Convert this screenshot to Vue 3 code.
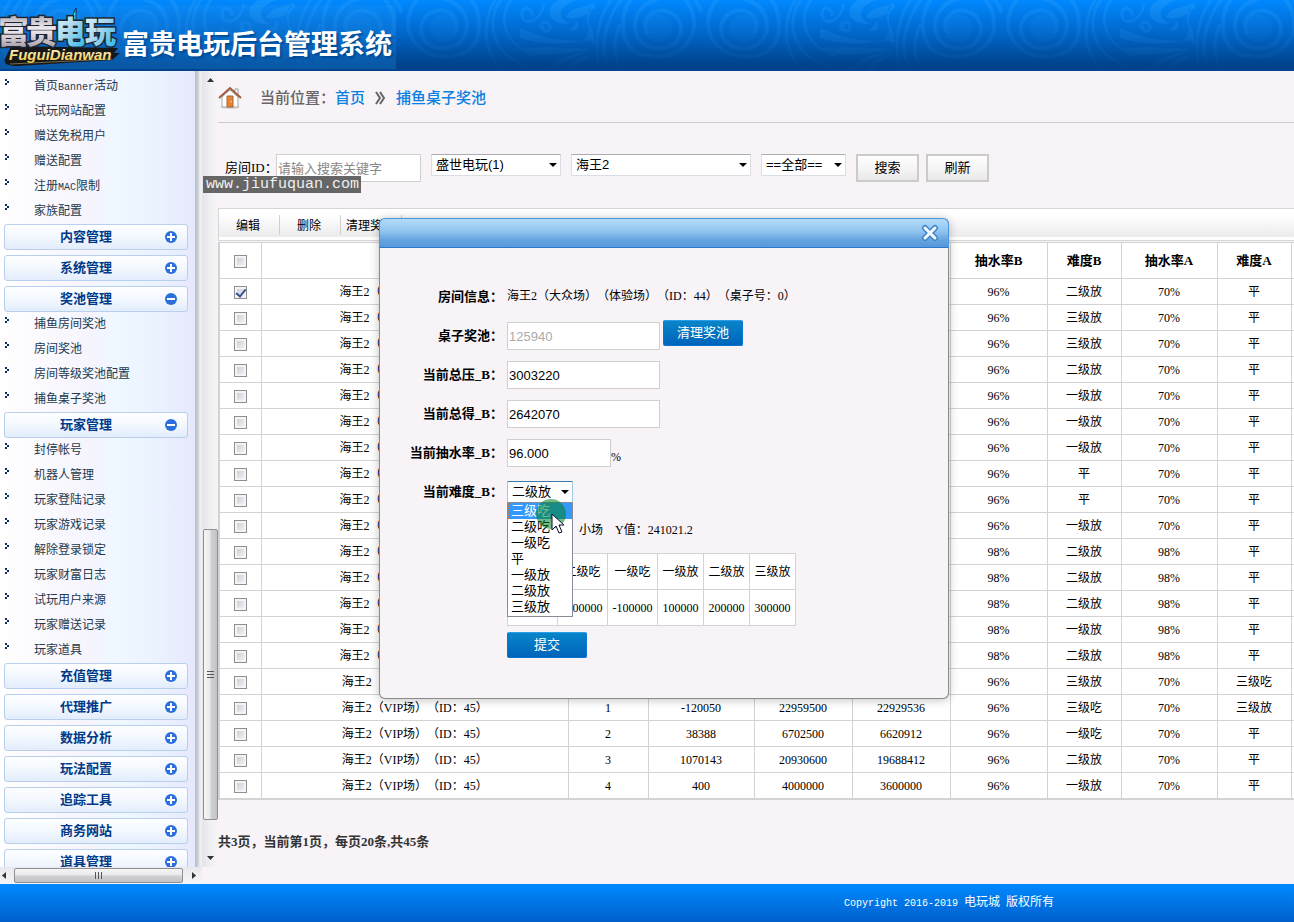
<script setup>
import { ref } from 'vue'

const menu = [
  { title: '', items: [['首页', 'Banner', '活动'], ['试玩网站配置'], ['赠送免税用户'], ['赠送配置'], ['注册', 'MAC', '限制'], ['家族配置']] },
  { title: '内容管理' },
  { title: '系统管理' },
  { title: '奖池管理', items: [['捕鱼房间奖池'], ['房间奖池'], ['房间等级奖池配置'], ['捕鱼桌子奖池']] },
  { title: '玩家管理', items: [['封停帐号'], ['机器人管理'], ['玩家登陆记录'], ['玩家游戏记录'], ['解除登录锁定'], ['玩家财富日志'], ['试玩用户来源'], ['玩家赠送记录'], ['玩家道具']] },
  { title: '充值管理' },
  { title: '代理推广' },
  { title: '数据分析' },
  { title: '玩法配置' },
  { title: '追踪工具' },
  { title: '商务网站' },
  { title: '道具管理' },
]

const levelB = ['二级放', '三级放', '三级放', '二级放', '一级放', '一级放', '一级放', '平', '平', '一级放', '二级放', '二级放', '二级放', '一级放', '二级放', '三级放', '三级吃', '一级吃', '二级放', '一级放']
const totals = {
  16: ['1', '-120050', '22959500', '22929536'],
  17: ['2', '38388', '6702500', '6620912'],
  18: ['3', '1070143', '20930600', '19688412'],
  19: ['4', '400', '4000000', '3600000'],
}
const rows = levelB.map((level, i) => ({
  checked: ref(i === 0),
  room: i < 15 ? '海王2（大众场）（ID：44）' : '海王2（VIP场）（ID：45）',
  totals: totals[i] || ['', '', '', ''],
  rateB: i > 9 && i < 15 ? '98%' : '96%',
  levelB: level,
  rateA: i > 9 && i < 15 ? '98%' : '70%',
  levelA: i === 15 ? '三级吃' : i === 16 ? '三级放' : '平',
}))

const options = ['三级吃', '二级吃', '一级吃', '平', '一级放', '二级放', '三级放']
const grades = [['三级吃', '-300000'], ['二级吃', '-200000'], ['一级吃', '-100000'], ['一级放', '100000'], ['二级放', '200000'], ['三级放', '300000']]
const difficulty = ref('二级放')
</script>

<template>
  <div class="page">
    <header class="top">
      <svg class="swirls" width="100%" height="71" aria-hidden="true">
        <defs>
          <pattern id="swirl" x="-4" y="0" width="300" height="71" patternUnits="userSpaceOnUse">
            <g fill="none" stroke="#38a8ff" stroke-width="4">
              <circle cx="62" cy="28" r="14" fill="#38a8ff" fill-opacity=".5" stroke="none" />
              <circle cx="148" cy="28" r="14" fill="#38a8ff" fill-opacity=".5" stroke="none" />
              <path d="M52 34C44 20 56 8 70 11C84 14 90 30 80 42C70 52 50 50 42 38C34 22 42 4 62 -1" />
              <path d="M36 -2C22 16 24 46 44 54C70 64 100 48 98 22Q97 8 88 -2" />
              <path d="M16 71C0 50 10 20 26 -2M26 71C14 50 20 36 24 24M4 71C-4 40 4 14 16 -2" stroke-width="3" />
              <path d="M158 34C166 20 154 8 140 11C126 14 120 30 130 42C140 52 160 50 168 38C176 22 168 4 148 -1" />
              <path d="M174 -2C188 16 186 46 166 54C140 64 112 48 112 22Q113 8 122 -2M106 12L98 -2" />
              <path d="M206 -2C188 20 196 60 236 66M216 -2C200 20 210 46 240 56M200 -2C184 26 188 54 208 71" stroke-width="3" />
              <path d="M248 4C244 24 226 26 226 14C226 4 238 8 236 16M246 30C240 20 256 20 254 28C252 34 244 30 248 25" stroke-width="3" />
            </g>
            <g fill="#45b1ff">
              <path d="M262 0C246 10 254 25 274 24C262 18 260 8 280 0ZM270 18C274 6 290 8 296 3C294 16 282 20 270 18ZM272 30Q280 26 280 21Q286 28 278 31ZM284 42Q298 34 290 22Q300 30 299 46Q296 38 284 42ZM298 2Q286 12 294 28Q290 12 299 8Z" />
              <path d="M224 28Q254 42 286 41Q250 47 224 38ZM220 48Q260 46 296 49Q264 56 240 54ZM252 70Q262 56 296 50Q272 58 258 71ZM268 71Q276 58 296 54Q282 62 276 71Z" />
            </g>
          </pattern>
          <linearGradient id="fade" x1="0" y1="0" x2="0" y2="1">
            <stop offset="0" stop-color="#fff" stop-opacity=".24" />
            <stop offset=".5" stop-color="#fff" stop-opacity=".12" />
            <stop offset="1" stop-color="#fff" stop-opacity=".01" />
          </linearGradient>
          <mask id="swirlMask"><rect width="100%" height="71" fill="url(#fade)" /></mask>
        </defs>
        <rect width="100%" height="71" fill="url(#swirl)" mask="url(#swirlMask)" />
      </svg>
      <div class="brand">
        <svg class="logo" width="122" height="71" viewBox="0 0 122 71" role="img" aria-label="富贵电玩">
          <defs>
            <linearGradient id="silver" x1="0" y1="0" x2="0" y2="1">
              <stop offset="0" stop-color="#8d8b98" /><stop offset=".5" stop-color="#f1edf1" /><stop offset="1" stop-color="#968b98" />
            </linearGradient>
            <linearGradient id="cyan" x1="0" y1="0" x2="1" y2="1">
              <stop offset="0" stop-color="#eafcff" /><stop offset=".5" stop-color="#a9d6ed" /><stop offset="1" stop-color="#16b4ee" />
            </linearGradient>
            <linearGradient id="gold" x1="0" y1="0" x2="0" y2="1">
              <stop offset="0" stop-color="#fffbe0" /><stop offset="1" stop-color="#f4c845" />
            </linearGradient>
          </defs>
          <path d="M11 47L118 49L114 54L120 54L112 61L18 67Q2 67 5 60Z" fill="#171717" />
          <path d="M10 65L112 60" stroke="#776b4c" stroke-width="1" />
          <path d="M70 22L76 9V22Z" fill="#35e5f5" stroke="#1d2a33" stroke-width="1" />
          <g class="logo-cn">
            <text x="-2" y="44" fill="url(#silver)">富</text>
            <text x="26" y="44" fill="url(#silver)">贵</text>
            <text x="55" y="44" fill="url(#cyan)">电</text>
            <text x="85" y="44" fill="url(#cyan)">玩</text>
          </g>
          <text class="logo-en" x="9" y="61" fill="url(#gold)">FuguiDianwan</text>
        </svg>
        <h1>富贵电玩后台管理系统</h1>
      </div>
    </header>

    <div class="body">
      <aside class="side">
        <nav class="menu">
          <section v-for="(group, g) in menu" :key="g" class="group">
            <button v-if="group.title" type="button" class="group-head">
              <span>{{ group.title }}</span>
              <svg width="14" height="14" viewBox="0 0 14 14" aria-hidden="true">
                <circle cx="7" cy="7" r="6" fill="#2b6fdc" />
                <path :d="group.items ? 'M3 7H11' : 'M3 7H11M7 3V11'" stroke="#fff" stroke-width="2" />
              </svg>
            </button>
            <ul v-if="group.items">
              <li v-for="(parts, i) in group.items" :key="i">
                <svg width="5" height="7" viewBox="0 0 5 7" aria-hidden="true"><path d="M0 0H2V2H4V4H2V6H0V4H2V2H0Z" fill="#0b2c66" /></svg>
                <a href="#"><span v-for="(part, p) in parts" :key="p" :class="{ mono: p === 1 }">{{ part }}</span></a>
              </li>
            </ul>
          </section>
        </nav>
        <div class="edge"></div>
        <div class="vbar">
          <svg width="7" height="17" viewBox="0 0 7 17" aria-hidden="true"><path d="M0 11L3.500 7L7 11Z" fill="#333" /></svg>
          <div class="vthumb"><i></i><i></i><i></i></div>
          <svg width="7" height="17" viewBox="0 0 7 17" aria-hidden="true"><path d="M0 6L3.500 10L7 6Z" fill="#333" /></svg>
        </div>
        <div class="hbar">
          <svg width="14" height="7" viewBox="0 0 14 7" aria-hidden="true"><path d="M6 0L2 3.500L6 7Z" fill="#333" /></svg>
          <div class="hthumb"><i></i><i></i><i></i></div>
          <svg width="19" height="7" viewBox="0 0 19 7" aria-hidden="true"><path d="M9 0L13 3.500L9 7Z" fill="#333" /></svg>
        </div>
      </aside>

      <main class="main">
        <div class="crumbs">
          <svg width="24" height="24" viewBox="0 0 24 24" aria-hidden="true">
            <ellipse cx="12" cy="21" rx="10" ry="2" fill="#dcd8da" />
            <path d="M17 3H20V10H17Z" fill="#fff" stroke="#9a9a9a" />
            <path d="M4 11L12 4L20 11V21H4Z" fill="#fff" stroke="#a5a5a5" />
            <path d="M9 10H15V21H9Z" fill="#e8822c" stroke="#a8683c" />
            <path d="M13 15V16" stroke="#fff" />
            <path d="M1 12L12 2L23 12" fill="none" stroke="#a3593f" stroke-width="2" />
          </svg>
          <span class="where">当前位置：</span>
          <a href="#">首页</a>
          <svg class="chev" width="11" height="14" viewBox="0 0 11 14" aria-hidden="true"><path d="M1 1L5 7L1 13M5 1L9 7L5 13" fill="none" stroke="#666" stroke-width="2" /></svg>
          <a href="#">捕鱼桌子奖池</a>
        </div>

        <form class="filters" @submit.prevent>
          <label for="room">房间ID：</label>
          <input id="room" class="box search" type="text" placeholder="请输入搜索关键字" />
          <span class="pick w-platform"><select aria-label="平台"><option>盛世电玩(1)</option></select></span>
          <span class="pick w-game"><select aria-label="游戏"><option>海王2</option></select></span>
          <span class="pick w-all"><select aria-label="范围"><option>==全部==</option></select></span>
          <button type="submit" class="plain">搜索</button>
          <button type="button" class="plain refresh">刷新</button>
        </form>

        <div class="toolbar">
          <button type="button">编辑</button>
          <button type="button">删除</button>
          <button type="button">清理奖池</button>
        </div>

        <div class="table-wrap">
          <table class="list">
            <colgroup>
              <col class="c42" /><col /><col class="c80" /><col class="c106" /><col class="c98" /><col class="c98" /><col class="c97" /><col class="c74" /><col class="c96" /><col class="c74" /><col class="c3" />
            </colgroup>
            <thead>
              <tr>
                <th><input type="checkbox" aria-label="全选" /></th>
                <th></th><th></th><th></th><th></th><th></th>
                <th>抽水率B</th><th>难度B</th><th>抽水率A</th><th>难度A</th><th></th>
              </tr>
            </thead>
            <tbody>
              <tr v-for="(row, i) in rows" :key="i">
                <td><input v-model="row.checked.value" type="checkbox" :aria-label="'选择第' + (i + 1) + '行'" /></td>
                <td>{{ row.room }}</td>
                <td v-for="(t, n) in row.totals" :key="n">{{ t }}</td>
                <td>{{ row.rateB }}</td>
                <td>{{ row.levelB }}</td>
                <td>{{ row.rateA }}</td>
                <td>{{ row.levelA }}</td>
                <td></td>
              </tr>
            </tbody>
          </table>
        </div>

        <p class="pager">共3页，当前第1页，每页20条,共45条</p>
      </main>
    </div>

    <footer class="foot"><span class="mono">Copyright 2016-2019 </span>电玩城<span class="mono">&nbsp;</span>版权所有</footer>

    <div class="watermark">www.jiufuquan.com</div>

    <div class="modal" role="dialog" aria-label="编辑奖池">
      <div class="modal-head">
        <button type="button" aria-label="关闭">
          <svg width="18" height="18" viewBox="0 0 18 18" aria-hidden="true">
            <path d="M4 4L14 14M14 4L4 14" stroke="#3f83c9" stroke-width="6" stroke-linecap="round" />
            <path d="M4 4L14 14M14 4L4 14" stroke="#f6fbff" stroke-width="3" stroke-linecap="round" />
          </svg>
        </button>
      </div>
      <form class="modal-body" @submit.prevent>
        <span class="lab">房间信息：</span>
        <div class="field">海王2（大众场）（体验场）（ID：44）（桌子号：0）</div>
        <label class="lab" for="pool">桌子奖池：</label>
        <div class="field"><input id="pool" class="box" type="text" value="125940" disabled /><button type="button" class="blue clear">清理奖池</button></div>
        <label class="lab" for="bet">当前总压_B：</label>
        <div class="field"><input id="bet" class="box" type="text" value="3003220" /></div>
        <label class="lab" for="win">当前总得_B：</label>
        <div class="field"><input id="win" class="box" type="text" value="2642070" /></div>
        <label class="lab" for="rate">当前抽水率_B：</label>
        <div class="field"><input id="rate" class="box short" type="text" value="96.000" /><span class="unit">%</span></div>
        <label class="lab" for="level">当前难度_B：</label>
        <div class="field drop">
          <span class="pick open"><select id="level" v-model="difficulty"><option v-for="o in options" :key="o">{{ o }}</option></select></span>
          <ul class="options" role="listbox" aria-label="难度">
            <li v-for="(o, i) in options" :key="o" role="option" :class="{ active: i === 0 }">{{ o }}</li>
          </ul>
          <span class="press"></span>
          <svg class="cursor" width="14" height="21" viewBox="0 0 14 21" aria-hidden="true"><path d="M1 1V17L5 13L8 20L11 19L8 12H13Z" fill="#fff" stroke="#0b0b2c" stroke-width="1" /></svg>
        </div>
        <span></span>
        <div class="field scene"><span>小场</span><span>Y值：241021.2</span></div>
        <span></span>
        <table class="grades">
          <colgroup><col span="3" class="c50" /><col span="3" class="c46" /></colgroup>
          <thead><tr><th v-for="g in grades" :key="g[0]">{{ g[0] }}</th></tr></thead>
          <tbody><tr><td v-for="g in grades" :key="g[0]">{{ g[1] }}</td></tr></tbody>
        </table>
        <span></span>
        <div class="submit"><button type="submit" class="blue">提交</button></div>
      </form>
    </div>
  </div>
</template>

<style>
html,
body {
  margin: 0;
  background: #f7f3f7;
}
</style>

<style scoped>
* {
  box-sizing: border-box;
}
.page {
  position: relative;
  display: flex;
  flex-direction: column;
  height: 100vh;
  overflow: hidden;
  font: 12px/16px "Liberation Serif", "Noto Sans CJK SC", sans-serif;
  text-spacing-trim: space-all;
  color: #000;
}
button,
input,
select {
  margin: 0;
  font-family: "Liberation Sans", "Noto Sans CJK SC", sans-serif;
}
ul,
h1,
p {
  margin: 0;
  padding: 0;
  list-style: none;
}
a {
  text-decoration: none;
}
.mono {
  font-family: "Liberation Mono", monospace;
  font-size: 10px;
}

.top {
  position: relative;
  flex: 0 0 71px;
  background: linear-gradient(#0089ff, #0068cc 45%, #00428b 92%, #00428b);
}
.swirls {
  position: absolute;
  inset: 0;
}
.brand {
  position: relative;
  display: flex;
  align-items: center;
  width: 396px;
  height: 69px;
  background: linear-gradient(transparent 5px, rgba(60, 170, 255, .12) 5px, rgba(30, 140, 230, .3));
}
.logo {
  flex: none;
  overflow: visible;
}
.logo-cn text {
  font: 900 31px "Noto Sans CJK SC", sans-serif;
  stroke: #1d2530;
  stroke-width: 3px;
  paint-order: stroke;
}
.logo-en {
  font: italic 700 15px "Liberation Sans", sans-serif;
}
.brand h1 {
  padding-top: 16px;
  font: 700 27px/36px "Noto Sans CJK SC", sans-serif;
  color: #fff;
  white-space: nowrap;
  text-shadow: 2px 2px 2px #004a94;
}

.body {
  flex: 1;
  display: flex;
  min-height: 0;
}
.side {
  flex: none;
  display: grid;
  grid-template: minmax(0, 1fr) 17px / 195px 7px 16px;
  height: 100%;
}
.menu {
  padding: 3px 7px 0 4px;
  overflow: hidden;
  background: linear-gradient(90deg, #fff, #f6f4fd 45%, #eef8ff 62%, #eaf0ff 85%, #e6e8fc);
}
.edge {
  background: linear-gradient(90deg, #b3bfce, #c8cdd6 40%, #e6e5ea 60%, #f4f3f8);
}
.group-head {
  display: flex;
  align-items: center;
  justify-content: space-between;
  width: 100%;
  height: 26px;
  margin-bottom: 5px;
  padding: 0 9px 0 55px;
  border: 1px solid #b9cfeb;
  border-radius: 3px;
  background: linear-gradient(#fdfeff, #f3f8ff 50%, #e2ecfb);
  font-weight: 700;
  font-size: 13px;
  line-height: 20px;
  color: #003a87;
}
.group-head:has(+ ul) {
  margin-bottom: 0;
}
.group li {
  display: flex;
  height: 25px;
  gap: 24px;
  padding-left: 1px;
}
.group li svg {
  margin-top: 5px;
}
.group li a {
  font-size: 12px;
  line-height: 24px;
  color: #24394c;
}
.vbar {
  display: flex;
  flex-direction: column;
  align-items: center;
  background: linear-gradient(90deg, #e4e3e7, #f0eff2 50%, #f5f4f7);
}
.vthumb {
  display: flex;
  flex-direction: column;
  align-items: center;
  justify-content: center;
  gap: 2px;
  width: 15px;
  height: 291px;
  margin: auto 0 30px;
  border: 1px solid #8f8f94;
  border-radius: 2px;
  background: linear-gradient(90deg, #f6f6f6, #e9e9ec 45%, #cfcfd4 55%, #c1c1c8);
}
.vthumb i {
  width: 7px;
  height: 1px;
  background: #555;
}
.hbar {
  grid-column: 1 / 3;
  display: flex;
  align-items: center;
  background: linear-gradient(#e9e8ec, #f5f4f7);
}
.hthumb {
  display: flex;
  align-items: center;
  justify-content: center;
  gap: 2px;
  flex: 1;
  height: 15px;
  border: 1px solid #8f8f94;
  border-radius: 2px;
  background: linear-gradient(#f6f6f6, #e9e9ec 45%, #cfcfd4 55%, #c1c1c8);
}
.hthumb i {
  width: 1px;
  height: 7px;
  background: #555;
}

.main {
  flex: 1;
  min-width: 0;
  overflow: hidden;
}
.crumbs {
  display: flex;
  align-items: center;
  height: 52px;
  padding-top: 2px;
  border-bottom: 1px solid #cfcccf;
  font-size: 15px;
  line-height: 24px;
  font-weight: 500;
  color: #666;
}
.crumbs a {
  color: #0a80e0;
}
.where {
  margin-left: 18px;
}
.chev {
  margin: 0 10px;
}
.filters {
  display: flex;
  align-items: flex-start;
  height: 85px;
  padding: 31px 0 0 7px;
}
.filters label {
  width: 51px;
  font-size: 13px;
  line-height: 28px;
  white-space: nowrap;
}
.box {
  width: 153px;
  height: 28px;
  padding: 2px 1px 0;
  border: 1px solid #cfcfcf;
  border-radius: 0;
  background: #fff;
  font-size: 13px;
  color: #000;
}
.box.search {
  width: 145px;
  padding: 0 1px;
}
.box::placeholder {
  color: #888;
}
.box:disabled {
  color: #aaa;
}
.pick {
  position: relative;
  display: block;
}
.pick::after {
  content: "";
  position: absolute;
  right: 4px;
  top: 9px;
  border: 4px solid transparent;
  border-top-color: #000;
  border-bottom: 0;
  pointer-events: none;
}
.pick select {
  display: block;
  width: 100%;
  height: 22px;
  padding: 0 4px;
  border: 1px solid #dcdce4;
  border-top-color: #abadb3;
  border-radius: 1px;
  appearance: none;
  background: #fff;
  font-size: 13px;
  line-height: 20px;
  color: #000;
}
.w-platform {
  width: 130px;
  margin: 0 10px;
}
.w-game {
  width: 180px;
}
.w-all {
  width: 85px;
  margin: 0 10px;
}
.plain {
  width: 63px;
  height: 28px;
  margin-right: 7px;
  padding: 0 0 3px;
  border: 2px solid #cbcbcb;
  border-radius: 0;
  background: linear-gradient(#fefefe, #f7f5f7 50%, #e9e9e9);
  font-size: 13px;
  color: #000;
}

.toolbar {
  display: flex;
  align-items: center;
  height: 33px;
  margin-bottom: 1px;
  border: 1px solid #d6d6d6;
  border-right: 0;
  background: linear-gradient(#fff 20%, #f7f5f7 50%, #ececec 90%, #fff 91%);
}
.toolbar button {
  width: 61px;
  height: 20px;
  padding: 0 2px 0 0;
  border: 0;
  border-right: 1px solid #d0d0d0;
  background: none;
  font-size: 12px;
  white-space: nowrap;
}
.table-wrap {
  border-left: 1px solid #d3d3d3;
  border-bottom: 1px solid #d3d3d3;
}
.list {
  width: 100%;
  table-layout: fixed;
  border-collapse: collapse;
  background: #fff;
  text-align: center;
}
.list th,
.list td {
  height: 26px;
  padding: 0;
  border: 1px solid #d3d3d3;
  white-space: nowrap;
}
.list th {
  height: 36px;
  font-size: 13px;
}
.list tr > :last-child {
  border-right: 0;
}
.list input {
  display: inline-grid;
  place-items: center;
  width: 13px;
  height: 13px;
  border: 1px solid #8e8f8f;
  appearance: none;
  background: linear-gradient(135deg, #c6cad4, #f6f6f8);
  box-shadow: inset 0 0 0 2px #f4f4f4;
  vertical-align: middle;
}
.list input:checked::before {
  content: "";
  width: 4px;
  height: 8px;
  margin-bottom: 2px;
  border: solid #3c5596;
  border-width: 0 2px 2px 0;
  transform: rotate(40deg);
}
.c42 { width: 42px; }
.c80 { width: 80px; }
.c106 { width: 106px; }
.c98 { width: 98px; }
.c97 { width: 97px; }
.c74 { width: 74px; }
.c96 { width: 96px; }
.c3 { width: 3px; }
.c50 { width: 50px; }
.c46 { width: 46px; }
.pager {
  padding-top: 32px;
  font-size: 13px;
  line-height: 20px;
  font-weight: 700;
  color: #333;
}

.foot {
  flex: 0 0 38px;
  padding-right: 240px;
  background: linear-gradient(#0089ff, #0060cc);
  line-height: 36px;
  text-align: right;
  white-space: pre;
  color: #fff;
}

.watermark {
  position: absolute;
  left: 203px;
  top: 176px;
  padding: 0 2px 0 3px;
  background: #666;
  font: 15px/17px "Liberation Mono", monospace;
  color: #f0f0f0;
}

.modal {
  position: absolute;
  left: 379px;
  top: 218px;
  width: 570px;
  border: 1px solid #8b8b8b;
  border-top: 0;
  border-radius: 6px;
  background: #f7f3f7;
  box-shadow: 0 1px 10px rgba(0, 0, 0, .25);
  background-clip: padding-box;
}
.modal-head {
  display: flex;
  align-items: center;
  justify-content: flex-end;
  height: 30px;
  margin: 0 -1px;
  padding-right: 9px;
  border: 1px solid #4b96dd;
  border-bottom-color: #2b79cb;
  border-radius: 6px 6px 0 0;
  background: linear-gradient(#b3dcfb, #8fc3ee 45%, #65a4e0 75%, #5598dc);
}
.modal-head button {
  display: flex;
  padding: 0;
  border: 0;
  background: none;
}
.modal-body {
  display: grid;
  grid-template-columns: 123px 1fr;
  grid-template-rows: repeat(7, 39px) 82px 66px;
  column-gap: 4px;
  padding-top: 29px;
}
.lab {
  font-size: 13px;
  line-height: 39px;
  font-weight: 700;
  text-align: right;
  white-space: nowrap;
}
.field {
  position: relative;
  display: flex;
  align-items: center;
  line-height: 39px;
}
.short {
  width: 104px;
}
.unit {
  padding-top: 10px;
}
.blue {
  width: 80px;
  height: 26px;
  padding: 0 0 3px;
  border: 1px solid #0b74cf;
  border-top-color: #2a9be8;
  border-radius: 2px;
  background: linear-gradient(#0885c8, #0064bb);
  font-size: 13px;
  color: #fff;
}
.clear {
  margin: 0 0 6px 3px;
}
.open {
  width: 66px;
}
.open select {
  border-color: #9fcbe8;
  border-top-color: #3d7bad;
}
.options {
  position: absolute;
  z-index: 1;
  left: 0;
  top: 30px;
  width: 66px;
  padding-bottom: 1px;
  border: 1px solid #888c96;
  background: #fff;
  font: 13px/16px "Liberation Sans", "Noto Sans CJK SC", sans-serif;
}
.options li {
  height: 16px;
  padding-left: 3px;
}
.options .active {
  outline: 1px dotted #d8741c;
  outline-offset: -1px;
  background: #3399ff;
  color: #fff;
}
.press {
  position: absolute;
  z-index: 2;
  left: 29px;
  top: 27px;
  width: 30px;
  height: 30px;
  border-radius: 50%;
  background: rgba(0, 128, 32, .55);
}
.cursor {
  position: absolute;
  z-index: 3;
  left: 44px;
  top: 41px;
}
.scene {
  gap: 12px;
  padding-left: 72px;
}
.grades {
  justify-self: start;
  align-self: start;
  width: 289px;
  margin-top: 3px;
  table-layout: fixed;
  border-collapse: collapse;
  background: #fff;
  text-align: center;
}
.grades th,
.grades td {
  height: 36px;
  padding: 0;
  border: 1px solid #d3d3d3;
  font-weight: 400;
  white-space: nowrap;
}
</style>
